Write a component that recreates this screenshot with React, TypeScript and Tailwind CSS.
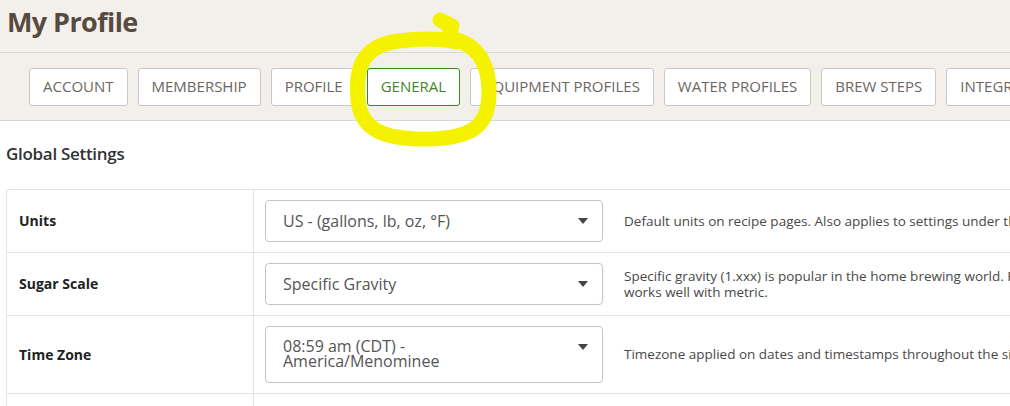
import React from "react";

const tabs = [
  "ACCOUNT",
  "MEMBERSHIP",
  "PROFILE",
  "GENERAL",
  "EQUIPMENT PROFILES",
  "WATER PROFILES",
  "BREW STEPS",
  "INTEGRATIONS",
];

function Caret() {
  return (
    <svg width="10" height="6" viewBox="0 0 10 6" className="shrink-0">
      <path d="M0 0 L10 0 L5 6 Z" fill="#444" />
    </svg>
  );
}

function Row({
  label,
  value,
  desc,
  tall,
}: {
  label: string;
  value: React.ReactNode;
  desc: string;
  tall?: boolean;
}) {
  return (
    <div className="flex border-b border-[#e3e3e3]">
      <div className="w-[247px] shrink-0 border-r border-[#e3e3e3] flex items-center pl-[12px] text-[14px] font-bold text-[#222]">
        {label}
      </div>
      <div className="flex items-center py-[10px] pl-[11px] shrink-0">
        <div
          className={
            tall
              ? "w-[338px] h-[57px] border border-[#c4c4c4] rounded-[4px] flex items-start justify-between pl-[17px] pr-[14px] pt-[12px] text-[16px] leading-[15px] text-[#555]"
              : "w-[338px] h-[42px] border border-[#c4c4c4] rounded-[4px] flex items-center justify-between pl-[17px] pr-[14px] text-[16px] text-[#555]"
          }
        >
          <div>{value}</div>
          <div className={tall ? "pt-[5px]" : ""}>
            <Caret />
          </div>
        </div>
      </div>
      <div className="w-[700px] shrink-0 flex items-center pl-[21px] text-[13.5px] leading-[16px] text-[#484848]">
        {desc}
      </div>
    </div>
  );
}

export default function App() {
  return (
    <div
      className="relative w-screen h-screen overflow-hidden bg-white"
      style={{ fontFamily: '"Open Sans", "Liberation Sans", sans-serif' }}
    >
      <div className="w-[1500px]">
        <div className="bg-[#f3f0ec]">
          <div className="h-[53px] border-b border-[#dcd8d3] pl-[7px] flex items-center">
            <h1 className="text-[27px] font-bold tracking-[-0.6px] text-[#574a40] -mt-[8px]">My Profile</h1>
          </div>
          <div className="h-[68px] border-b border-[#dcd8d3] flex items-center gap-[10px] pl-[29px]">
            {tabs.map((t) => (
              <div
                key={t}
                className={
                  t === "GENERAL"
                    ? "h-[38px] px-[13px] flex items-center rounded-[3px] border border-[#3d8a1e] bg-white text-[15px] text-[#3e8a22]"
                    : "h-[38px] px-[13px] flex items-center rounded-[3px] border border-[#c8c8c8] bg-white text-[15px] text-[#6b6661]"
                }
              >
                {t}
              </div>
            ))}
          </div>
        </div>

        <div className="pl-[6px] pt-[20px] text-[17px] font-semibold text-[#333] tracking-[-0.3px]">
          Global Settings
        </div>

        <div className="ml-[6px] mt-[22px] border-l border-t border-[#e3e3e3] rounded-tl-[4px]">
          <Row
            label="Units"
            value="US - (gallons, lb, oz, °F)"
            desc="Default units on recipe pages. Also applies to settings under the Equipment tab."
          />
          <Row
            label="Sugar Scale"
            value="Specific Gravity"
            desc="Specific gravity (1.xxx) is popular in the home brewing world. Plato is used in professional brewing and works well with metric."
          />
          <Row
            label="Time Zone"
            tall
            value={
              <>
                08:59 am (CDT) -
                <br />
                America/Menominee
              </>
            }
            desc="Timezone applied on dates and timestamps throughout the site."
          />
          <div className="flex h-[40px]">
            <div className="w-[247px] border-r border-[#e3e3e3]" />
          </div>
        </div>
      </div>

      <svg
        className="absolute left-0 top-0 pointer-events-none"
        width="1010"
        height="406"
        viewBox="0 0 1010 406"
      >
        <path
          d="M440 20 L452 26 L448 38 C 476 42, 489 62, 489 92 C 489 122, 477 138, 430 139 C 386 140, 361 131, 358 100 C 355 70, 361 46, 398 41 C 420 38, 440 38, 458 42"
          fill="none"
          stroke="#f5f200"
          strokeWidth="15"
          strokeLinecap="round"
          strokeLinejoin="round"
        />
      </svg>
    </div>
  );
}
